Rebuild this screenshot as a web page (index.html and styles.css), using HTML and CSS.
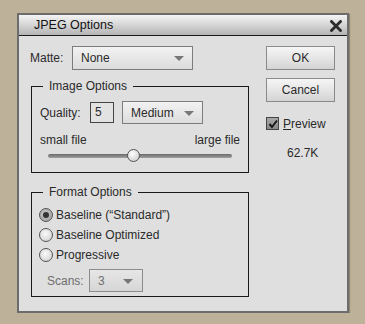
FILE: index.html
```html
<!DOCTYPE html>
<html lang="en">
<head>
  <meta charset="UTF-8">
  <title>JPEG Options</title>
  <link rel="stylesheet" href="styles.css">
</head>
<body>

<div class="dialog">
  <div class="titlebar">
    <span class="title">JPEG Options</span>
    <svg class="close" width="12" height="12" viewBox="0 0 12 12">
      <path d="M1.5 1.5 L10.5 10.5 M10.5 1.5 L1.5 10.5" stroke="#2a2a2a" stroke-width="2.8" stroke-linecap="square"/>
    </svg>
  </div>

  <div class="content">
    <div class="left">
      <div class="matte-row">
        <span class="label">Matte:</span>
        <div class="select matte"><span>None</span><i class="arrow"></i></div>
      </div>

      <fieldset class="group image-opts">
        <legend>Image Options</legend>
        <div class="quality-row">
          <span class="label">Quality:</span>
          <div class="num">5</div>
          <div class="select medium"><span>Medium</span><i class="arrow"></i></div>
        </div>
        <div class="size-row">
          <span>small file</span>
          <span>large file</span>
        </div>
        <div class="slider">
          <div class="track"></div>
          <div class="thumb"></div>
        </div>
      </fieldset>

      <fieldset class="group format-opts">
        <legend>Format Options</legend>
        <label class="radio-row"><i class="radio on"></i>Baseline (“Standard”)</label>
        <label class="radio-row"><i class="radio"></i>Baseline Optimized</label>
        <label class="radio-row"><i class="radio"></i>Progressive</label>
        <div class="scans-row">
          <span class="label dim">Scans:</span>
          <div class="select scans disabled"><span>3</span><i class="arrow"></i></div>
        </div>
      </fieldset>
    </div>

    <div class="right">
      <div class="btn">OK</div>
      <div class="btn">Cancel</div>
      <label class="check-row">
        <i class="check">
          <svg width="10" height="10" viewBox="0 0 10 10"><path d="M1.5 5 L4 8 L9 1.5" stroke="#1a1a1a" stroke-width="2" fill="none"/></svg>
        </i>
        <span><u>P</u>review</span>
      </label>
      <div class="size">62.7K</div>
    </div>
  </div>
</div>

</body>
</html>
```

FILE: styles.css
```css
body {
  margin: 0;
  background: #bdb299;
  font-family: 'Liberation Sans', Arial, sans-serif;
  font-size: 12px;
  color: #2a2a2a;
}

.dialog {
  margin: 13px 0 0 17px;
  width: 328px;
  height: 296px;
  border: 2px solid #6c6c6c;
  background: #dfdfdf;
  box-shadow: 1px 1px 1px rgba(0, 0, 0, 0.25);
}

.titlebar {
  height: 20px;
  border-bottom: 1px solid #1a1a1a;
  background: linear-gradient(#f4f4f4, #d8d8d8 45%, #b4b4b4);
  display: flex;
  align-items: center;
  justify-content: space-between;
  padding: 0 5px 0 15px;
}

.title {
  font-size: 12.5px;
  color: #111;
}

.close {
  margin-top: 1px;
}

.content {
  display: flex;
  padding: 10px 12px 0 11px;
}

.left {
  width: 219px;
}

.right {
  margin-left: 17px;
  width: 69px;
  display: flex;
  flex-direction: column;
}

.matte-row {
  display: flex;
  align-items: center;
  height: 24px;
}

.matte-row .label {
  width: 42px;
}

.select {
  box-sizing: border-box;
  height: 24px;
  border: 1px solid #7c7c7c;
  background: linear-gradient(#f2f2f2, #dcdcdc);
  display: flex;
  align-items: center;
  justify-content: space-between;
  padding: 0 8px 0 8px;
}

.arrow {
  width: 0;
  height: 0;
  border-left: 5px solid transparent;
  border-right: 5px solid transparent;
  border-top: 5px solid #777;
  margin-top: 1px;
}

.matte {
  width: 121px;
}

.group {
  margin: 0 0 0 1px;
  width: 218px;
  box-sizing: border-box;
  border: 1px solid #1a1a1a;
  padding: 0 8px;
  min-width: 0;
}

.group legend {
  padding: 0 6px;
  margin-left: 3px;
  line-height: 14px;
}

.image-opts {
  margin-top: 9px;
  height: 94px;
  padding-top: 8px;
}

.quality-row {
  display: flex;
  align-items: center;
  height: 23px;
}

.quality-row .label {
  width: 50px;
}

.num {
  box-sizing: border-box;
  width: 24px;
  height: 21px;
  border: 1px solid #444;
  padding-left: 4px;
  line-height: 19px;
  background: #e2e2e2;
}

.medium {
  width: 81px;
  margin-left: 8px;
  height: 23px;
}

.size-row {
  display: flex;
  justify-content: space-between;
  margin-top: 9px;
  line-height: 14px;
}

.slider {
  position: relative;
  height: 14px;
  margin: 2px 8px 0 8px;
  display: flex;
  align-items: center;
}

.track {
  flex: 1;
  height: 4px;
  border-radius: 2px;
  background: linear-gradient(#6a6a6a, #a0a0a0);
}

.thumb {
  position: absolute;
  left: 79px;
  top: 0;
  box-sizing: border-box;
  width: 13px;
  height: 13px;
  border-radius: 50%;
  border: 1px solid #555;
  background: radial-gradient(circle at 40% 35%, #ffffff, #d6d6d6 70%, #b0b0b0);
}

.format-opts {
  margin-top: 12px;
  height: 112px;
  padding-top: 6px;
}

.radio-row {
  display: flex;
  align-items: center;
  height: 20px;
  margin-left: -1px;
}

.radio {
  box-sizing: border-box;
  width: 14px;
  height: 14px;
  border-radius: 50%;
  border: 1px solid #555;
  background: radial-gradient(circle at 45% 40%, #fafafa, #d8d8d8 70%, #b8b8b8);
  margin-right: 3px;
  display: flex;
  align-items: center;
  justify-content: center;
}

.radio.on {
  background: radial-gradient(circle at 45% 40%, #c8c8c8, #9a9a9a);
}

.radio.on::after {
  content: "";
  width: 6px;
  height: 6px;
  border-radius: 50%;
  background: #333;
}

.scans-row {
  display: flex;
  align-items: center;
  margin-top: 4px;
  margin-left: 7px;
}

.dim {
  color: #6e6e6e;
}

.scans-row .label {
  width: 42px;
}

.scans {
  width: 54px;
  height: 23px;
  padding-right: 9px;
}

.disabled {
  color: #6e6e6e;
  border-color: #8c8c8c;
  background: linear-gradient(#e6e6e6, #d6d6d6);
}

.btn {
  box-sizing: border-box;
  height: 24px;
  border: 1px solid #8a8a8a;
  background: linear-gradient(#f6f6f6, #d4d4d4);
  text-align: center;
  line-height: 22px;
  margin-bottom: 8px;
}

.check-row {
  display: flex;
  align-items: center;
  margin-top: 7px;
  height: 13px;
}

.check {
  box-sizing: border-box;
  width: 13px;
  height: 13px;
  border: 1px solid #444;
  background: linear-gradient(#a8a8a8, #8a8a8a);
  display: flex;
  align-items: center;
  justify-content: center;
  margin-right: 4px;
}

.check svg {
  display: block;
}

.size {
  margin-top: 16px;
  padding-left: 21px;
}
```
